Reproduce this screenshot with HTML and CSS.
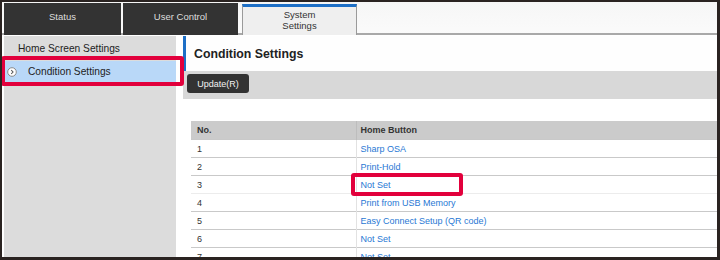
FILE: index.html
```html
<!DOCTYPE html>
<html>
<head>
<meta charset="utf-8">
<link rel="stylesheet" href="styles.css">
</head>
<body>
<div class="frame">
  <div class="tabbar">
    <div class="tab tab-status">Status</div>
    <div class="tab tab-user">User Control</div>
    <div class="tab tab-active">System<br>Settings</div>
  </div>
  <div class="body">
    <div class="sidebar">
      <div class="side-item">Home Screen Settings</div>
      <div class="side-item side-selected">
        <svg class="side-icon" width="10" height="10" viewBox="0 0 10 10">
          <circle cx="5" cy="5" r="4.3" fill="#fff" stroke="#8a8a8a" stroke-width="1"/>
          <path d="M4.2 3 L6 5 L4.2 7" fill="none" stroke="#555" stroke-width="1.1"/>
        </svg>
        <span>Condition Settings</span>
        <span class="callout callout-side"></span>
      </div>
    </div>
    <div class="main">
      <div class="title">Condition Settings</div>
      <div class="toolbar"><button class="btn">Update(R)</button></div>
      <table class="grid">
        <thead>
          <tr><th class="c1">No.</th><th class="c2">Home Button</th></tr>
        </thead>
        <tbody>
          <tr><td class="c1">1</td><td class="c2"><a>Sharp OSA</a></td></tr>
          <tr><td class="c1">2</td><td class="c2"><a>Print-Hold</a></td></tr>
          <tr class="row-light"><td class="c1">3</td><td class="c2 marked"><a>Not Set</a><span class="callout callout-cell"></span></td></tr>
          <tr><td class="c1">4</td><td class="c2"><a>Print from USB Memory</a></td></tr>
          <tr><td class="c1">5</td><td class="c2"><a>Easy Connect Setup (QR code)</a></td></tr>
          <tr><td class="c1">6</td><td class="c2"><a>Not Set</a></td></tr>
          <tr><td class="c1">7</td><td class="c2"><a>Not Set</a></td></tr>
        </tbody>
      </table>
    </div>
  </div>
</div>
</body>
</html>
```
FILE: styles.css
```css
* { box-sizing: border-box; }
html, body { margin: 0; padding: 0; background: #fff; }
body { font-family: "Liberation Sans", Arial, sans-serif; }

.frame {
  width: 720px;
  height: 260px;
  border-style: solid;
  border-color: #2a2321;
  border-width: 2px 3px 3px 2px;
  overflow: hidden;
  background: #fff;
}

.tabbar {
  display: flex;
  height: 33px;
  padding: 1px 0 0 2px;
  background: linear-gradient(#f6f6f6, #fbfbfb);
  box-shadow: inset 0 -2px #a9a9a9;
}
.tab {
  height: 32px;
  font-size: 9.5px;
  line-height: 11px;
  text-align: center;
  padding-top: 8px;
}
.tab-status { width: 117px; background: #333; color: #dedede; margin-right: 2px; }
.tab-user { width: 115px; background: #333; color: #dedede; margin-right: 4px; }
.tab-active {
  width: 115px;
  margin-top: 1px;
  height: 31px;
  background: #efefef;
  color: #333;
  border-top: 3px solid #1d6fc6;
  border-left: 1px solid #9a9a9a;
  border-right: 1px solid #9a9a9a;
  line-height: 10.5px;
  padding-top: 3px;
}

.body {
  display: flex;
  margin-top: 1px;
  padding-left: 2px;
  height: 230px;
}

.sidebar {
  width: 172px;
  flex: none;
  background: #dcdcdc;
  padding-top: 2px;
}
.side-item {
  position: relative;
  height: 21px;
  display: flex;
  align-items: center;
  font-size: 10.2px;
  color: #222;
  padding-left: 14px;
}
.side-selected {
  margin-top: 2px;
  background: #b9d8f8;
  padding-left: 3px;
}
.side-icon { margin-right: 11px; flex: none; }

.callout {
  position: absolute;
  border: 4px solid #e2003c;
  border-radius: 3px;
  pointer-events: none;
}
.callout-side { left: -3px; right: -8px; top: -5px; bottom: -4px; }

.main {
  flex: 1;
  margin-left: 7px;
  overflow: hidden;
}
.title {
  height: 35px;
  border-left: 3px solid #1d6fc6;
  padding-left: 8px;
  display: flex;
  align-items: center;
  font-size: 12.3px;
  font-weight: bold;
  color: #222;
  background: #fefefe;
}
.toolbar {
  height: 28px;
  background: #d8d8d8;
  padding: 3px 4px;
}
.btn {
  display: block;
  width: 62px;
  height: 19px;
  border: none;
  border-radius: 3px;
  background: #333;
  color: #f2f2f2;
  font-family: "Liberation Sans", Arial, sans-serif;
  font-size: 9px;
  padding: 0;
}

.grid {
  margin: 22px 0 0 8px;
  border-collapse: collapse;
  width: 640px;
  table-layout: fixed;
  font-size: 9px;
}
.grid th, .grid td {
  height: 18px;
  padding: 0;
  text-align: left;
  vertical-align: middle;
}
.grid th {
  background: #cbcbcb;
  color: #333;
  font-weight: bold;
}
.grid td {
  border-top: 1px solid #c9c9c9;
  color: #333;
  padding-top: 1px;
}
.grid .c1 { width: 165px; padding-left: 6px; }
.grid .c2 { padding-left: 4px; }
.grid th.c2 { border-left: 1px solid #bdbdbd; }
.grid td.c2 { border-left: 1px solid #e2e2e2; }
.grid a { color: #2878d4; text-decoration: none; }
.row-light + tr td { border-top-color: #ececec; }
.marked { position: relative; }
.callout-cell { left: -6px; top: -3px; width: 112px; height: 23px; }
```
